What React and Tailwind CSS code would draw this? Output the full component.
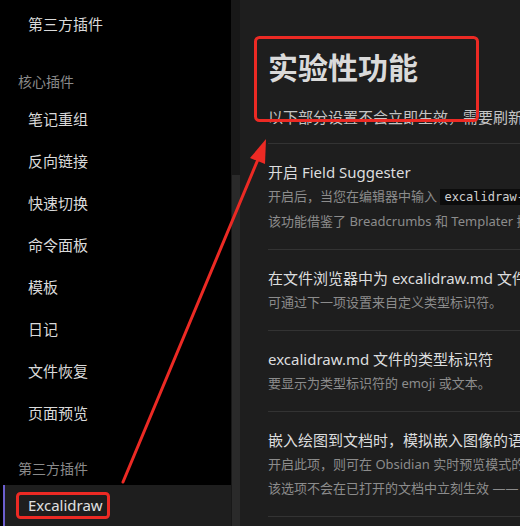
import React from "react";

const coreItems = ["笔记重组", "反向链接", "快速切换", "命令面板", "模板", "日记", "文件恢复", "页面预览"];

const Setting = ({ title, children }) => (
  <div className="border-t border-[#333] py-4">
    <div className="text-[15px] leading-6 text-[#dcddde] whitespace-nowrap">{title}</div>
    <div className="text-[13px] leading-6 text-[#8c8c8c] whitespace-nowrap">{children}</div>
  </div>
);

const App = () => {
  return (
    <div
      className="relative w-[520px] h-[526px] overflow-hidden flex bg-[#1e1e1e]"
      style={{ fontFamily: '"Noto Sans", "Noto Sans CJK SC", sans-serif' }}
    >
      {/* ------ sidebar ------ */}
      <div className="w-[231px] shrink-0 bg-black flex flex-col">
        <div className="h-[48px] flex items-center pl-[28px] text-[15px] text-[#dadada]">第三方插件</div>
        <div className="h-[34px] mt-[16px] flex items-center pl-[18px] text-[14px] text-[#8a8a8a]">核心插件</div>
        {coreItems.map((item) => (
          <div key={item} className="h-[42px] flex items-center pl-[28px] text-[15px] text-[#dadada]">
            {item}
          </div>
        ))}
        <div className="h-[34px] mt-[17px] flex items-center pl-[18px] text-[14px] text-[#8a8a8a]">第三方插件</div>
        <div className="flex-1 ml-[3px] border-l-2 border-[#6c5fcf] bg-[#1e1e1e] flex items-center pl-[23px] text-[15px] text-[#e0e0e0]">
          Excalidraw
        </div>
      </div>

      {/* ------ scrollbar ------ */}
      <div className="w-[9px] shrink-0 bg-[#181818] flex flex-col">
        <div className="h-[175px]" />
        <div className="flex-1 ml-[1px] bg-[#2a2a2a]" />
      </div>

      {/* ------ content ------ */}
      <div className="flex-1 min-w-0 pl-[28px]">
        <div className="w-[700px]">
          <h1 className="mt-[48px] h-[40px] leading-[40px] text-[30px] font-bold text-[#dadada] whitespace-nowrap">
            实验性功能
          </h1>
          <p className="mt-[17px] text-[15px] leading-6 text-[#c4c4c4] whitespace-nowrap">
            以下部分设置不会立即生效，需要刷新文件列表或重启 Obsidian 才会生效。
          </p>
          <div className="mt-[14px]">
            <Setting title="开启 Field Suggester">
              <div>
                开启后，当您在编辑器中输入{" "}
                <code
                  className="bg-[#0c0c0c] px-1 py-[1px] text-[12px] text-[#d0d0d0]"
                  style={{ fontFamily: '"DejaVu Sans Mono", monospace' }}
                >
                  excalidraw-
                </code>{" "}
                时，会弹出一个带有插件所有 Frontmatter 属性的建议菜单。
              </div>
              <div>该功能借鉴了 Breadcrumbs 和 Templater 插件。</div>
            </Setting>
            <Setting title="在文件浏览器中为 excalidraw.md 文件添加类型标识符（如 ✏️）">
              可通过下一项设置来自定义类型标识符。
            </Setting>
            <Setting title="excalidraw.md 文件的类型标识符">要显示为类型标识符的 emoji 或文本。</Setting>
            <Setting title="嵌入绘图到文档时，模拟嵌入图像的语法">
              <div>开启此项，则可在 Obsidian 实时预览模式的编辑视图下显示嵌入的绘图。</div>
              <div>该选项不会在已打开的文档中立刻生效 —— 你需要重新打开它们。</div>
            </Setting>
            <div className="border-t border-[#333]" />
          </div>
        </div>
      </div>

      {/* ------ red annotations ------ */}
      <svg className="absolute inset-0 pointer-events-none" width="520" height="526" viewBox="0 0 520 526">
        <rect x="255.5" y="37.5" width="222" height="83" rx="4" fill="none" stroke="#ec2a24" strokeWidth="3" />
        <rect x="17.5" y="493.5" width="91" height="24" rx="3" fill="none" stroke="#ec2a24" strokeWidth="3" />
        <line x1="123" y1="482" x2="259" y2="157" stroke="#ec2a24" strokeWidth="3" strokeLinecap="round" />
        <polygon points="266,139 265,164 250,158" fill="#ec2a24" />
      </svg>
    </div>
  );
};

export default App;
